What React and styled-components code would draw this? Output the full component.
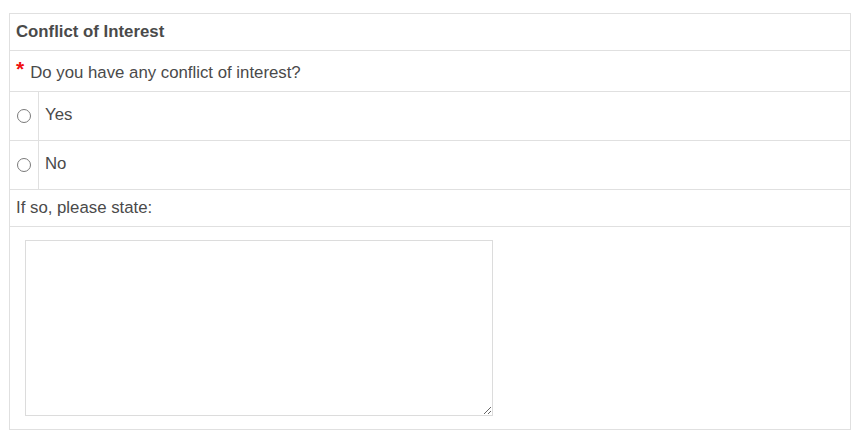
import styled, { createGlobalStyle } from "styled-components";

const GlobalStyle = createGlobalStyle`
  body {
    margin: 0;
    background: #fff;
    font-family: "Liberation Sans", Arial, sans-serif;
  }
`;

const Page = styled.div`
  padding: 13px 0 0 9px;
`;

const Panel = styled.div`
  width: 840px;
  border: 1px solid #e0e0e0;
  color: #4a4a4a;
  font-size: 16.8px;
`;

const Row = styled.div`
  display: flex;
  align-items: center;
  height: ${(p) => p.$h}px;
  border-bottom: 1px solid #e0e0e0;
  &:last-child {
    border-bottom: none;
  }
`;

const Title = styled.div`
  padding-left: 6px;
  font-weight: bold;
`;

const Label = styled.div`
  padding-left: 6px;
  display: flex;
  align-items: baseline;
`;

const Required = styled.span`
  color: #f01010;
  font-size: 21px;
  font-weight: bold;
  margin-right: 6px;
  position: relative;
  top: -2px;
`;

const RadioCell = styled.label`
  width: 28px;
  align-self: stretch;
  display: flex;
  align-items: center;
  justify-content: center;
  border-right: 1px solid #e0e0e0;
`;

const Radio = styled.input.attrs({ type: "radio" })`
  appearance: none;
  width: 14px;
  height: 14px;
  margin: 0;
  border: 1px solid #7a7a7a;
  border-radius: 50%;
  background: #fff;
  &:checked {
    background: radial-gradient(circle, #333 0 3px, #fff 3.5px);
  }
`;

const Option = styled.div`
  padding-left: 6px;
  margin-top: -3px;
`;

const AreaRow = styled.div`
  padding: 13px 0 13px 15px;
`;

const Area = styled.textarea`
  display: block;
  width: 468px;
  height: 176px;
  box-sizing: border-box;
  border: 1px solid #dcdcdc;
  margin: 0;
  font-family: inherit;
  font-size: 14px;
  outline: none;
`;

const options = ["Yes", "No"];

export default function App() {
  return (
    <Page>
      <GlobalStyle />
      <Panel>
        <Row $h={36}>
          <Title>Conflict of Interest</Title>
        </Row>
        <Row $h={40}>
          <Label>
            <Required>*</Required>
            Do you have any conflict of interest?
          </Label>
        </Row>
        {options.map((o) => (
          <Row $h={48} key={o}>
            <RadioCell>
              <Radio name="coi" value={o} />
            </RadioCell>
            <Option>{o}</Option>
          </Row>
        ))}
        <Row $h={36}>
          <Label>If so, please state:</Label>
        </Row>
        <AreaRow>
          <Area />
        </AreaRow>
      </Panel>
    </Page>
  );
}
